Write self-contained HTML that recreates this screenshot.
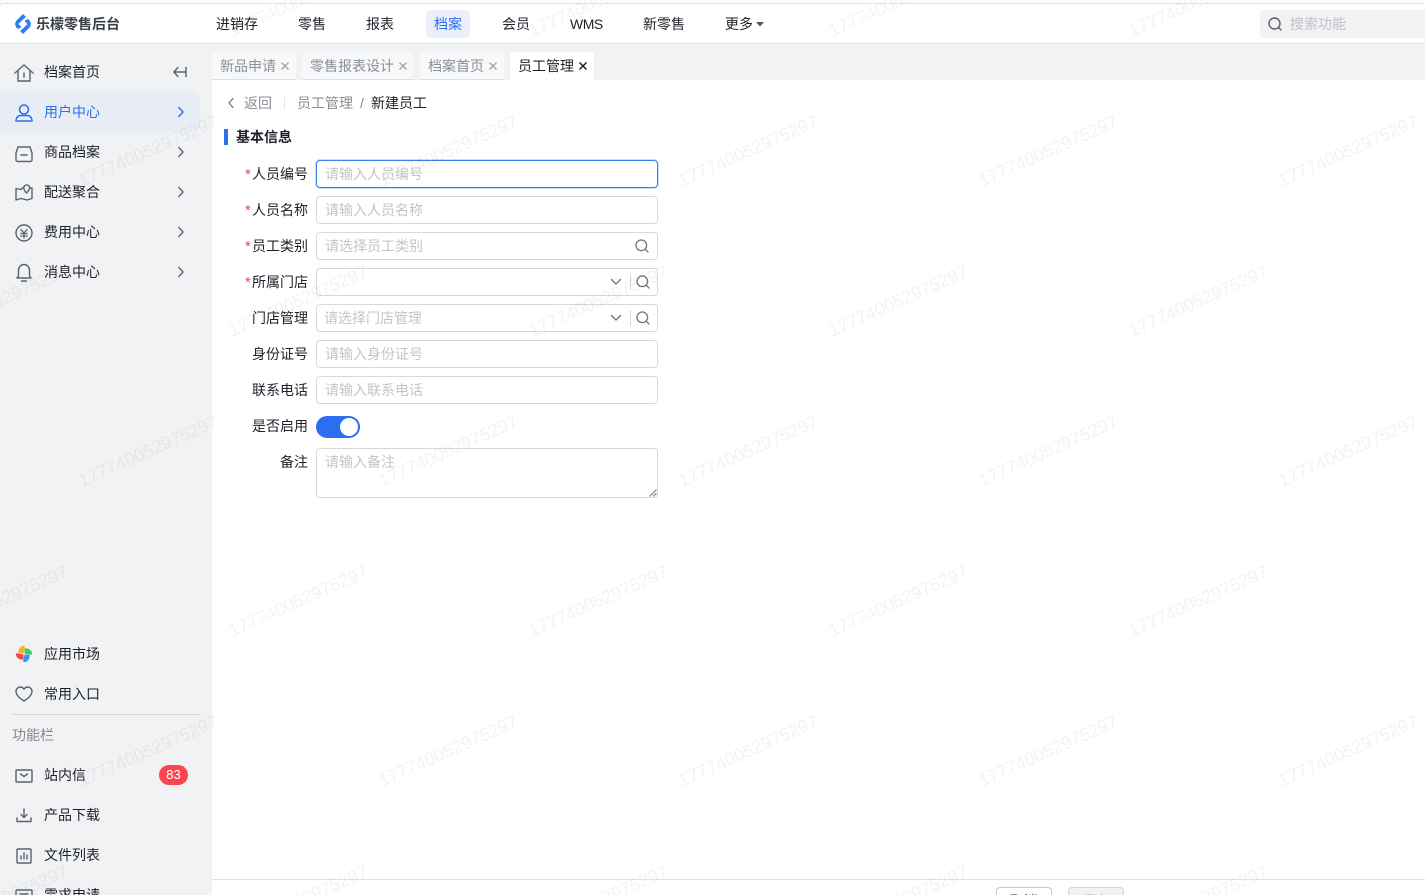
<!DOCTYPE html>
<html lang="zh"><head><meta charset="utf-8"><title>新建员工</title>
<style>
*{box-sizing:border-box}
html,body{margin:0;padding:0;width:1425px;height:895px;overflow:hidden;background:#fff}
body{position:relative;font-family:"Liberation Sans","Noto Sans CJK SC",sans-serif;font-size:14px;color:#1d2129}
#root{position:absolute;left:0;top:0;width:1425px;height:895px;overflow:hidden}
.t{position:absolute;white-space:nowrap;line-height:20px;height:20px}
.box{position:absolute}
.nav{top:14px;color:#1d2129}
.side{left:44px;color:#1d2129}
.tab{position:absolute;top:52px;height:28px;background:#f7f8f9;border-bottom:1px solid #dcdee2;border-radius:4px 4px 0 0}
.tab span{position:absolute;left:8px;top:4px;line-height:20px;color:#8a8f96;white-space:nowrap}
.lab{right:1117px;text-align:right}
.req{color:#f5424c;font-size:15px;position:absolute;left:245px}
.inp{position:absolute;left:316px;width:342px;height:28px;background:rgba(255,255,255,.6);border:1px solid #d6d8dc;border-radius:4px}
.inp span{position:absolute;left:8px;top:3px;line-height:20px;color:#c2c4c8;white-space:nowrap}
svg{position:absolute;display:block;overflow:visible}
.ic{fill:none;stroke:#5c6170;stroke-width:1.4;stroke-linecap:round;stroke-linejoin:round}
.gr{fill:none;stroke:#70747c;stroke-width:1.3;stroke-linecap:round;stroke-linejoin:round}
.chev{fill:none;stroke:#5c6170;stroke-width:1.4;stroke-linecap:round;stroke-linejoin:round}
.clip{position:absolute;overflow:hidden}
</style></head><body>
<div id="root">

<!-- sidebar / strip backgrounds -->
<div class="box" style="left:0;top:44px;width:212px;height:851px;background:#f1f2f4"></div>
<div class="box" style="left:212px;top:44px;width:1213px;height:36px;background:#f1f2f4"></div>

<!-- header -->
<div class="box" style="left:0;top:3px;width:1425px;height:1px;background:#e2e3e5"></div>
<div class="box" style="left:0;top:43px;width:1425px;height:1px;background:#dcdde0"></div>

<svg style="left:15px;top:14px" width="16" height="20" viewBox="0 0 16 20">
<path d="M8 0L15 7 16 10 15 13 8 20 1 13 0 10 1 7z" fill="#2f7df6"/>
<path d="M8 5.500L12.500 10 8 14.500 3.500 10z" fill="#fff"/>
<path d="M11.500 2.500L8 5.500 9.500 7 13.500 4.500zM4.500 17.500L8 14.500 6.500 13 2.500 15.500z" fill="#fff"/>
</svg>
<div class="t" style="left:36px;top:14px;font-weight:700;color:#3b4048;letter-spacing:0">乐檬零售后台</div>

<div class="t nav" style="left:216px">进销存</div>
<div class="t nav" style="left:298px">零售</div>
<div class="t nav" style="left:366px">报表</div>
<div class="box" style="left:426px;top:10px;width:44px;height:28px;background:#eaeffa;border-radius:4px"></div>
<div class="t nav" style="left:434px;color:#2b6ff0">档案</div>
<div class="t nav" style="left:502px">会员</div>
<div class="t nav" style="left:570px;letter-spacing:-.5px">WMS</div>
<div class="t nav" style="left:643px">新零售</div>
<div class="t nav" style="left:725px">更多</div>
<svg style="left:756px;top:22px" width="8" height="5"><path d="M0 0H8L4 4.500z" fill="#555"/></svg>

<div class="box" style="left:1260px;top:10px;width:165px;height:28px;background:#f1f2f4;border-radius:4px 0 0 4px"></div>
<svg style="left:1268px;top:17px" width="14" height="14" viewBox="0 0 14 14"><circle cx="6.500" cy="6.500" r="5.500" fill="none" stroke="#5c6068" stroke-width="1.400"/><path d="M10.500 10.500L13 13" stroke="#5c6068" stroke-width="1.400" stroke-linecap="round"/></svg>
<div class="t" style="left:1290px;top:14px;color:#c0c2c6">搜索功能</div>

<!-- tabs -->
<div class="tab" style="left:212px;width:84px"><span>新品申请</span></div>
<div class="tab" style="left:302px;width:112px"><span>零售报表设计</span></div>
<div class="tab" style="left:420px;width:84px"><span>档案首页</span></div>
<div class="tab" style="left:510px;width:84px;background:#fff;border-bottom:0"><span style="color:#1d2129">员工管理</span></div>
<svg style="left:281px;top:62px" width="8" height="8"><path d="M.5 .5l7 7M7.500 .5l-7 7" stroke="#a0a3a8" stroke-width="1.300"/></svg>
<svg style="left:399px;top:62px" width="8" height="8"><path d="M.5 .5l7 7M7.500 .5l-7 7" stroke="#a0a3a8" stroke-width="1.300"/></svg>
<svg style="left:489px;top:62px" width="8" height="8"><path d="M.5 .5l7 7M7.500 .5l-7 7" stroke="#a0a3a8" stroke-width="1.300"/></svg>
<svg style="left:579px;top:62px" width="8" height="8"><path d="M.5 .5l7 7M7.500 .5l-7 7" stroke="#222" stroke-width="1.500"/></svg>

<!-- sidebar -->
<div class="box" style="left:0;top:92px;width:200px;height:40px;background:#e8ecf5;border-radius:0 8px 8px 0"></div>

<svg class="ic" style="left:14px;top:64px" width="20" height="18" viewBox="0 0 20 18"><path d="M1 9L10 1l9 8M4 7v10h12V7M10 9v4"/></svg>
<div class="t side" style="top:62px">档案首页</div>
<svg class="ic" style="left:173px;top:67px" width="14" height="10" viewBox="0 0 14 10"><path d="M5 .5L.8 5 5 9.500M1 5h12M13 .5v9"/></svg>

<svg style="left:15px;top:104px" width="18" height="18" viewBox="0 0 18 18" fill="none" stroke="#2b6ff0" stroke-width="1.500"><circle cx="9" cy="5.500" r="4.500"/><path d="M1 17c0-2 .5-4.500 4-5.500h8c3.500 1 4 3.500 4 5.500z" stroke-linejoin="round"/></svg>
<div class="t side" style="top:102px;color:#2b6ff0">用户中心</div>

<svg class="ic" style="left:15px;top:146px" width="18" height="16" viewBox="0 0 18 16"><path d="M3 1h12l2 6v7a1.500 1.500 0 0 1-1.500 1.500h-13A1.500 1.500 0 0 1 1 14V7z"/><path d="M6 9h6"/></svg>
<div class="t side" style="top:142px">商品档案</div>

<svg class="ic" style="left:15px;top:184px" width="18" height="17" viewBox="0 0 18 17"><path d="M8.500 3.500L5.500 5.500 1 4.500V16l5-1.500 6 1.500 5-1.500V4h-1.500"/><path d="M11.500 9C10 7.500 8.800 6 8.800 3.800a2.900 2.900 0 0 1 5.800 0C14.600 6 13 7.500 11.500 9z"/></svg>
<div class="t side" style="top:182px">配送聚合</div>

<svg class="ic" style="left:15px;top:224px" width="18" height="18" viewBox="0 0 18 18"><circle cx="9" cy="9" r="8"/><path d="M6 5.500L9 9l3-3.500M5.800 9.500h6.400M5.800 12h6.400M9 9v5" stroke-width="1.300"/></svg>
<div class="t side" style="top:222px">费用中心</div>

<svg class="ic" style="left:16px;top:263px" width="16" height="19" viewBox="0 0 16 19"><path d="M8 1.500A5.500 5.500 0 0 0 2.500 7v5.500L1 15h14l-1.500-2.500V7A5.500 5.500 0 0 0 8 1.500zM5.500 18h5"/></svg>
<div class="t side" style="top:262px">消息中心</div>

<svg class="chev" style="left:178px;top:107px;stroke:#2b6ff0" width="6" height="10" viewBox="0 0 6 10"><path d="M.8 .5L5 5 .8 9.500"/></svg>
<svg class="chev" style="left:178px;top:147px" width="6" height="10" viewBox="0 0 6 10"><path d="M.8 .5L5 5 .8 9.500"/></svg>
<svg class="chev" style="left:178px;top:187px" width="6" height="10" viewBox="0 0 6 10"><path d="M.8 .5L5 5 .8 9.500"/></svg>
<svg class="chev" style="left:178px;top:227px" width="6" height="10" viewBox="0 0 6 10"><path d="M.8 .5L5 5 .8 9.500"/></svg>
<svg class="chev" style="left:178px;top:267px" width="6" height="10" viewBox="0 0 6 10"><path d="M.8 .5L5 5 .8 9.500"/></svg>

<svg style="left:15px;top:645px" width="18" height="18" viewBox="0 0 18 18">
<path d="M8.500 8.500H3.500C3 5 4.500 1.500 8.500 .8 9.500 .7 9.800 1 9.800 1.500z" fill="#fbb117"/>
<path d="M9.500 8.500V3.500C13 3 16.500 4.500 17.200 8.500 17.300 9.500 17 9.800 16.500 9.800z" fill="#3ccf5a"/>
<path d="M9.500 9.500H14.500C15 13 13.500 16.500 9.500 17.200 8.500 17.300 8.200 17 8.200 16.500z" fill="#3b8ff7"/>
<path d="M8.500 9.500V14.500C5 15 1.500 13.500 .8 9.500 .7 8.500 1 8.200 1.500 8.200z" fill="#f5474a"/>
</svg>
<div class="t side" style="top:644px">应用市场</div>

<svg class="ic" style="left:15px;top:686px" width="18" height="16" viewBox="0 0 18 16"><path d="M9 15S1 10.500 1 5.500C1 2.800 3 1 5.300 1 7 1 8.300 2 9 3.200 9.700 2 11 1 12.700 1 15 1 17 2.800 17 5.500 17 10.500 9 15 9 15z"/></svg>
<div class="t side" style="top:684px">常用入口</div>

<div class="box" style="left:12px;top:714px;width:188px;height:1px;background:#d8dade"></div>
<div class="t" style="left:12px;top:725px;color:#85888e">功能栏</div>

<svg class="ic" style="left:15px;top:769px" width="18" height="14" viewBox="0 0 18 14"><rect x="1" y="1" width="16" height="12" rx="1"/><path d="M5.500 5L9 7.500 12.500 5"/></svg>
<div class="t side" style="top:765px">站内信</div>
<div class="box" style="left:159px;top:765px;width:29px;height:20px;border-radius:10px;background:#f9464f;color:#fff;font-size:13px;line-height:20px;text-align:center">83</div>

<svg class="ic" style="left:16px;top:808px" width="16" height="15" viewBox="0 0 16 15"><path d="M8 1v8M5 6.500L8 9.500l3-3M1 10v3.500h14V10"/></svg>
<div class="t side" style="top:805px">产品下载</div>

<svg class="ic" style="left:16px;top:848px" width="16" height="16" viewBox="0 0 16 16"><rect x="1" y="1" width="14" height="14" rx="1"/><path d="M5 11V8M8 11V5M11 11V7"/></svg>
<div class="t side" style="top:845px">文件列表</div>

<div class="clip" style="left:0;top:885px;width:212px;height:10px">
<svg class="ic" style="left:15px;top:4px" width="18" height="14" viewBox="0 0 18 14"><rect x="1" y="1" width="16" height="14" rx="1"/><path d="M5 5h8"/></svg>
<div class="t side" style="top:0">需求申请</div>
</div>

<!-- breadcrumb -->
<svg class="gr" style="left:228px;top:98px" width="6" height="10" viewBox="0 0 6 10"><path d="M5 .5L1 5l4 4.500"/></svg>
<div class="t" style="left:244px;top:93px;color:#8a8e95">返回</div>
<div class="box" style="left:284px;top:97px;width:1px;height:12px;background:#e4e5e8"></div>
<div class="t" style="left:297px;top:93px;color:#8a8e95">员工管理</div>
<div class="t" style="left:360px;top:93px;color:#8a8e95">/</div>
<div class="t" style="left:371px;top:93px;color:#1d2129">新建员工</div>

<div class="box" style="left:224px;top:129px;width:4px;height:16px;background:#2b6ff0"></div>
<div class="t" style="left:236px;top:127px;font-weight:700;color:#1d2129">基本信息</div>

<!-- form -->
<div class="t lab" style="top:164px">人员编号</div><div class="t req" style="top:165px">*</div>
<div class="t lab" style="top:200px">人员名称</div><div class="t req" style="top:201px">*</div>
<div class="t lab" style="top:236px">员工类别</div><div class="t req" style="top:237px">*</div>
<div class="t lab" style="top:272px">所属门店</div><div class="t req" style="top:273px">*</div>
<div class="t lab" style="top:308px">门店管理</div>
<div class="t lab" style="top:344px">身份证号</div>
<div class="t lab" style="top:380px">联系电话</div>
<div class="t lab" style="top:416px">是否启用</div>
<div class="t lab" style="top:452px">备注</div>

<div class="inp" style="top:160px;border-color:#3d7df2;box-shadow:0 0 0 1px #c9dcfb"><span>请输入人员编号</span></div>
<div class="inp" style="top:196px"><span>请输入人员名称</span></div>
<div class="inp" style="top:232px"><span>请选择员工类别</span></div>
<div class="inp" style="top:268px"></div>
<div class="inp" style="top:304px"><span style="left:7px">请选择门店管理</span></div>
<div class="inp" style="top:340px"><span>请输入身份证号</span></div>
<div class="inp" style="top:376px"><span>请输入联系电话</span></div>
<div class="inp" style="top:448px;height:50px"><span>请输入备注</span></div>

<svg class="gr" style="left:635px;top:239px" width="14" height="14" viewBox="0 0 14 14"><circle cx="6.300" cy="6.300" r="5.300"/><path d="M10.300 10.300L13 13"/></svg>
<svg class="gr" style="left:636px;top:275px" width="14" height="14" viewBox="0 0 14 14"><circle cx="6.300" cy="6.300" r="5.300"/><path d="M10.300 10.300L13 13"/></svg>
<svg class="gr" style="left:636px;top:311px" width="14" height="14" viewBox="0 0 14 14"><circle cx="6.300" cy="6.300" r="5.300"/><path d="M10.300 10.300L13 13"/></svg>
<svg class="gr" style="left:611px;top:279px" width="10" height="6" viewBox="0 0 10 6"><path d="M.5 .5L5 5 9.500 .5"/></svg>
<svg class="gr" style="left:611px;top:315px" width="10" height="6" viewBox="0 0 10 6"><path d="M.5 .5L5 5 9.500 .5"/></svg>
<div class="box" style="left:630px;top:274px;width:1px;height:16px;background:#d6d8dc"></div>
<div class="box" style="left:630px;top:310px;width:1px;height:16px;background:#d6d8dc"></div>

<svg style="left:649px;top:489px" width="8" height="8" viewBox="0 0 8 8"><path d="M7.500 .5L.5 7.500M7.500 4L4 7.500" stroke="#777" stroke-width="1"/></svg>

<div class="box" style="left:316px;top:416px;width:44px;height:22px;border-radius:11px;background:#2b6ff0"></div>
<div class="box" style="left:340px;top:418px;width:18px;height:18px;border-radius:50%;background:#fff"></div>

<!-- footer -->
<div class="box" style="left:212px;top:879px;width:1213px;height:1px;background:#dfe0e3"></div>
<div class="clip" style="left:996px;top:887px;width:128px;height:8px">
<div class="box" style="left:0;top:0;width:56px;height:28px;border:1px solid #c6c8cc;border-radius:4px;background:#fff;text-align:center;line-height:27px;color:#1d2129">取消</div>
<div class="box" style="left:72px;top:0;width:56px;height:28px;border:1px solid #d6d8dc;border-radius:4px;background:#f1f2f4;text-align:center;line-height:27px;color:#b0b3b8">保存</div>
</div>

<!-- watermark -->
<svg style="left:0;top:0;pointer-events:none;overflow:hidden" width="1425" height="895" viewBox="0 0 1425 895">
<defs><style>.w{font:18px "Liberation Sans",sans-serif;fill:rgba(40,45,60,.055)}</style></defs>
<g class="w">
<text transform="translate(-68 37) rotate(-24)">177740052975297</text>
<text transform="translate(232 37) rotate(-24)">177740052975297</text>
<text transform="translate(532 37) rotate(-24)">177740052975297</text>
<text transform="translate(832 37) rotate(-24)">177740052975297</text>
<text transform="translate(1132 37) rotate(-24)">177740052975297</text>
<text transform="translate(82 187) rotate(-24)">177740052975297</text>
<text transform="translate(382 187) rotate(-24)">177740052975297</text>
<text transform="translate(682 187) rotate(-24)">177740052975297</text>
<text transform="translate(982 187) rotate(-24)">177740052975297</text>
<text transform="translate(1282 187) rotate(-24)">177740052975297</text>
<text transform="translate(-68 337) rotate(-24)">177740052975297</text>
<text transform="translate(232 337) rotate(-24)">177740052975297</text>
<text transform="translate(532 337) rotate(-24)">177740052975297</text>
<text transform="translate(832 337) rotate(-24)">177740052975297</text>
<text transform="translate(1132 337) rotate(-24)">177740052975297</text>
<text transform="translate(82 487) rotate(-24)">177740052975297</text>
<text transform="translate(382 487) rotate(-24)">177740052975297</text>
<text transform="translate(682 487) rotate(-24)">177740052975297</text>
<text transform="translate(982 487) rotate(-24)">177740052975297</text>
<text transform="translate(1282 487) rotate(-24)">177740052975297</text>
<text transform="translate(-68 637) rotate(-24)">177740052975297</text>
<text transform="translate(232 637) rotate(-24)">177740052975297</text>
<text transform="translate(532 637) rotate(-24)">177740052975297</text>
<text transform="translate(832 637) rotate(-24)">177740052975297</text>
<text transform="translate(1132 637) rotate(-24)">177740052975297</text>
<text transform="translate(82 787) rotate(-24)">177740052975297</text>
<text transform="translate(382 787) rotate(-24)">177740052975297</text>
<text transform="translate(682 787) rotate(-24)">177740052975297</text>
<text transform="translate(982 787) rotate(-24)">177740052975297</text>
<text transform="translate(1282 787) rotate(-24)">177740052975297</text>
<text transform="translate(-68 937) rotate(-24)">177740052975297</text>
<text transform="translate(232 937) rotate(-24)">177740052975297</text>
<text transform="translate(532 937) rotate(-24)">177740052975297</text>
<text transform="translate(832 937) rotate(-24)">177740052975297</text>
<text transform="translate(1132 937) rotate(-24)">177740052975297</text>
</g>
</svg>
</div>
</body></html>
